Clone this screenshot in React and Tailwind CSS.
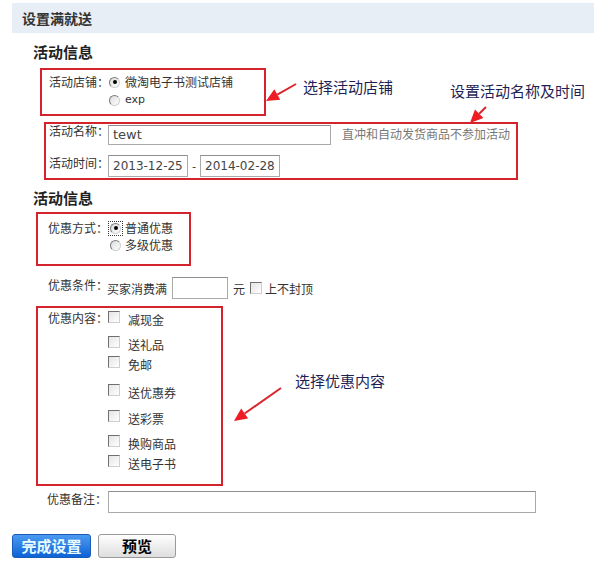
import React from 'react';

const font = { fontFamily: '"Noto Sans CJK SC", "Noto Sans", sans-serif' };

function Radio({ checked, focus }) {
  return (
    <span className={focus ? 'flex items-center justify-center w-[13px] h-[13px] shrink-0 outline outline-1 outline-dotted outline-[#333]' : 'flex items-center justify-center w-[13px] h-[13px] shrink-0'}>
      <span className="flex items-center justify-center w-[11px] h-[11px] rounded-full border border-[#7b7b7b] border-b-[#d0d0d0] border-r-[#d0d0d0] bg-gradient-to-br from-[#dcdcdc] to-white">
        {checked && <span className="w-[4px] h-[4px] rounded-full bg-black" />}
      </span>
    </span>
  );
}

function Check() {
  return <span className="block w-[12px] h-[12px] border border-[#6f6f6f] border-b-[#cfcfcf] border-r-[#cfcfcf] bg-gradient-to-br from-[#e4e4e4] to-white shrink-0" />;
}

const contents = [
  { text: '减现金', cls: 'flex items-start h-[16px] mt-[3px]' },
  { text: '送礼品', cls: 'flex items-start h-[16px] mt-[9px]' },
  { text: '免邮', cls: 'flex items-start h-[16px] mt-[4px]' },
  { text: '送优惠券', cls: 'flex items-start h-[16px] mt-[12px]' },
  { text: '送彩票', cls: 'flex items-start h-[16px] mt-[10px]' },
  { text: '换购商品', cls: 'flex items-start h-[16px] mt-[9px]' },
  { text: '送电子书', cls: 'flex items-start h-[16px] mt-[4px]' },
];

function Arrow({ x1, y1, x2, y2 }) {
  const a = Math.atan2(y2 - y1, x2 - x1);
  const len = 13;
  const w = 6;
  const bx = x2 - Math.cos(a) * len;
  const by = y2 - Math.sin(a) * len;
  const p1 = `${bx + Math.sin(a) * w},${by - Math.cos(a) * w}`;
  const p2 = `${bx - Math.sin(a) * w},${by + Math.cos(a) * w}`;
  return (
    <g>
      <line x1={x1} y1={y1} x2={bx} y2={by} stroke="#d9262c" strokeWidth="2" />
      <polygon points={`${x2},${y2} ${p1} ${p2}`} fill="#ee1c24" />
    </g>
  );
}

export default function App() {
  return (
    <div className="relative w-[594px] h-[573px] bg-white overflow-hidden text-[12px] leading-[12px] text-[#333] whitespace-nowrap" style={font}>
      {/* header */}
      <div className="ml-[12px] mt-[3px] h-[30px] pl-[10px] flex items-center bg-[#e7eef6] text-[14px] font-bold text-[#333]">
        设置满就送
      </div>

      <div className="ml-[33px] mt-[11px] text-[15px] leading-[16px] font-bold text-[#222]">活动信息</div>

      {/* store */}
      <div className="ml-[40px] mt-[8px] w-[226px] h-[48px] border-2 border-[#d5232e] pl-[7px] pt-[4px] flex flex-col gap-[2px]">
        <div className="flex items-center h-[16px]">
          <span className="w-[59px] shrink-0">活动店铺：</span>
          <Radio checked />
          <span className="ml-[4px]">微淘电子书测试店铺</span>
        </div>
        <div className="flex items-center h-[16px]">
          <span className="w-[59px] shrink-0" />
          <Radio />
          <span className="ml-[4px]" style={{ fontFamily: '"DejaVu Sans", sans-serif', fontSize: 11 }}>exp</span>
        </div>
      </div>

      {/* name + time */}
      <div className="ml-[44px] mt-[6px] w-[474px] h-[58px] border-2 border-[#d5232e] pl-[3px] pt-[1px]">
        <div className="flex items-start">
          <span className="w-[59px] shrink-0 pt-[0px]">活动名称：</span>
          <div className="w-[223px] h-[20px] shrink-0 border border-[#aaaaaa] border-t-[#8e8e8e] flex items-center pl-[4px] text-[13px] text-[#444]" style={{ fontFamily: '"DejaVu Sans", sans-serif' }}>tewt</div>
          <span className="ml-[11px] pt-[3px] text-[#777]">直冲和自动发货商品不参加活动</span>
        </div>
        <div className="flex items-start mt-[10px]">
          <span className="w-[59px] shrink-0 pt-[2px]">活动时间：</span>
          <div className="w-[80px] h-[22px] border border-[#aaaaaa] border-t-[#8e8e8e] flex items-center pl-[4px] text-[12px] text-[#444]" style={{ fontFamily: '"DejaVu Sans", sans-serif' }}>2013-12-25</div>
          <span className="w-[12px] text-center pt-[5px]">-</span>
          <div className="w-[80px] h-[22px] border border-[#aaaaaa] border-t-[#8e8e8e] flex items-center pl-[4px] text-[12px] text-[#444]" style={{ fontFamily: '"DejaVu Sans", sans-serif' }}>2014-02-28</div>
        </div>
      </div>

      <div className="ml-[33px] mt-[10px] text-[15px] leading-[16px] font-bold text-[#222]">活动信息</div>

      {/* discount type */}
      <div className="ml-[36px] mt-[6px] w-[155px] h-[54px] border-2 border-[#d5232e] pl-[10px] pt-[6px] flex flex-col gap-[1px]">
        <div className="flex items-center h-[16px]">
          <span className="w-[61px] shrink-0">优惠方式：</span>
          <Radio checked focus />
          <span className="ml-[3px]">普通优惠</span>
        </div>
        <div className="flex items-center h-[16px]">
          <span className="w-[61px] shrink-0" />
          <Radio />
          <span className="ml-[3px]">多级优惠</span>
        </div>
      </div>

      {/* condition */}
      <div className="ml-[48px] mt-[11px] flex items-start">
        <span className="w-[59px] shrink-0 pt-[2px]">优惠条件：</span>
        <span className="pt-[6px]">买家消费满</span>
        <div className="ml-[5px] w-[56px] h-[22px] shrink-0 border border-[#aaaaaa] border-t-[#8e8e8e]" />
        <span className="ml-[5px] pt-[6px]">元</span>
        <span className="ml-[5px] mt-[5px]"><Check /></span>
        <span className="ml-[3px] pt-[6px]">上不封顶</span>
      </div>

      {/* content */}
      <div className="ml-[36px] mt-[7px] w-[187px] h-[180px] border-2 border-[#d5232e] pl-[10px] flex">
        <span className="w-[60px] shrink-0 pt-[4px]">优惠内容：</span>
        <div className="flex flex-col">
          {contents.map((c) => (
            <div key={c.text} className={c.cls}>
              <Check />
              <span className="ml-[8px] pt-[3px]">{c.text}</span>
            </div>
          ))}
        </div>
      </div>

      {/* remark */}
      <div className="ml-[47px] mt-[5px] flex items-start">
        <span className="w-[61px] shrink-0 pt-[2px]">优惠备注：</span>
        <div className="w-[428px] h-[22px] shrink-0 border border-[#aaaaaa] border-t-[#8e8e8e]" />
      </div>

      {/* buttons */}
      <div className="ml-[12px] mt-[21px] flex gap-[7px]">
        <button className="w-[79px] h-[24px] rounded-[3px] bg-gradient-to-b from-[#4a9af0] to-[#0c62d6] border border-[#1a5cb8] text-[15px] font-bold text-[#e8fbff] leading-[22px]">
          完成设置
        </button>
        <button className="w-[78px] h-[24px] rounded-[3px] bg-gradient-to-b from-white to-[#dedede] border border-[#9a9a9a] text-[15px] font-bold text-black leading-[22px]">
          预览
        </button>
      </div>

      {/* annotations */}
      <svg className="absolute left-0 top-0 pointer-events-none" width="594" height="573">
        <Arrow x1={296} y1={84} x2={266} y2={101} />
        <Arrow x1={486} y1={107} x2={470} y2={123} />
        <Arrow x1={281} y1={388} x2={234} y2={421} />
      </svg>
      <span className="absolute left-[303px] top-[79px] text-[15px] leading-[16px] text-[#1f1f55]">选择活动店铺</span>
      <span className="absolute left-[450px] top-[83px] text-[15px] leading-[16px] text-[#1f1f55]">设置活动名称及时间</span>
      <span className="absolute left-[295px] top-[373px] text-[15px] leading-[16px] text-[#1f1f55]">选择优惠内容</span>
    </div>
  );
}
